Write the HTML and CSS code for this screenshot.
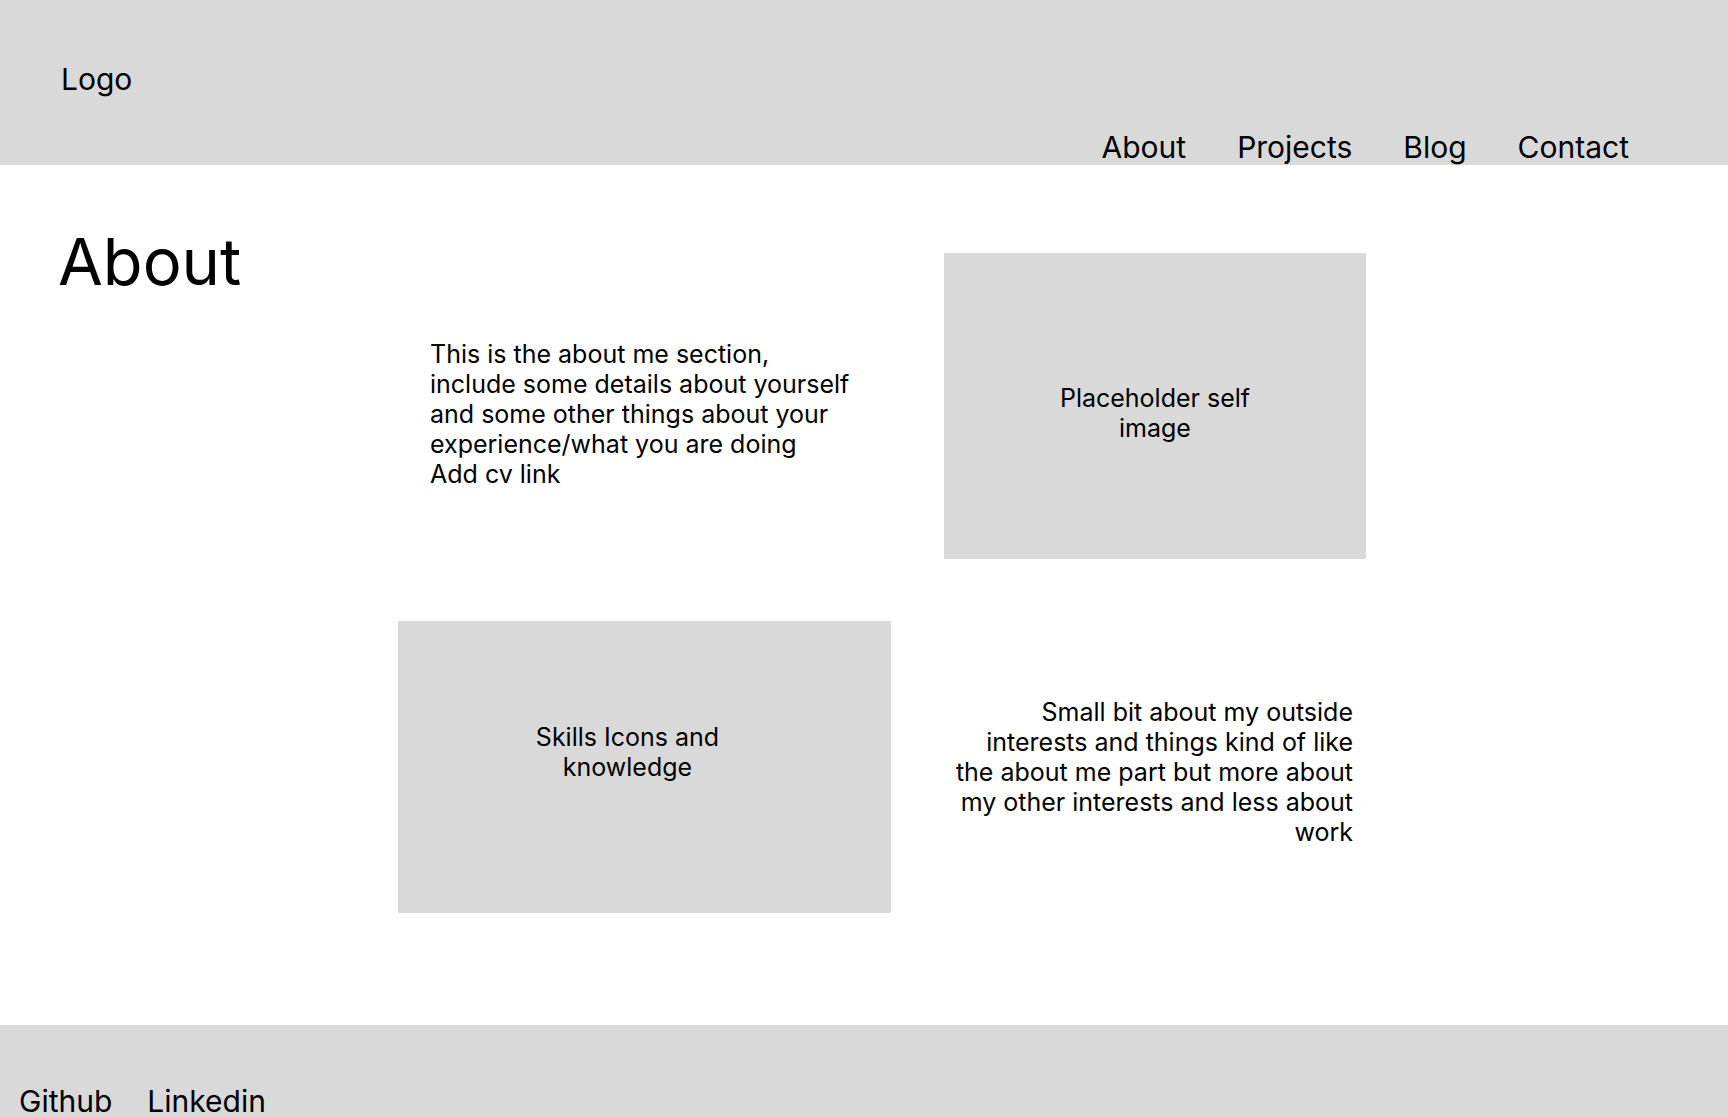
FILE: index.html
```html
<!DOCTYPE html>
<html lang="en">
<head>
  <meta charset="UTF-8" />
  <meta name="viewport" content="width=device-width, initial-scale=1.0"/>
  <title>About</title>
  <link rel="stylesheet" href="styles.css">
</head>
<body>
  <header class="site-header">
    <div class="logo">Logo</div>
    <nav class="nav">
      <a href="#">About</a>
      <a href="#">Projects</a>
      <a href="#">Blog</a>
      <a href="#">Contact</a>
    </nav>
  </header>

  <main class="about">
    <h1 class="about-title">About</h1>
    <div class="about-grid">
      <p class="about-text">This is the about me section, include some details about yourself and some other things about your experience/what you are doing<br>Add cv link</p>
      <div class="placeholder photo"><span>Placeholder self image</span></div>
      <div class="placeholder skills"><span>Skills Icons and knowledge</span></div>
      <p class="about-text outside">Small bit about my outside interests and things kind of like the about me part but more about my other interests and less about work</p>
    </div>
  </main>

  <footer class="site-footer">
    <a href="#">Github</a>
    <a href="#">Linkedin</a>
  </footer>
</body>
</html>
```

FILE: styles.css
```css
body {
  margin: 0;
  font-family: 'Inter', 'Noto Sans', sans-serif;
  color: #000;
  background: #fff;
}
a {
  color: inherit;
  text-decoration: none;
}
.site-header {
  height: 165px;
  background: #d9d9d9;
  display: flex;
  justify-content: space-between;
  padding: 0 99px 0 61px;
}
.logo {
  font-size: 30px;
  margin-top: 61px;
  align-self: flex-start;
}
.nav {
  display: flex;
  gap: 51px;
  align-self: flex-end;
  font-size: 30px;
}
.about {
  display: flex;
  align-items: flex-start;
  padding: 57px 0 0 58px;
}
.about-title {
  width: 340px;
  margin: 0;
  font-size: 65px;
  font-weight: 400;
  flex-shrink: 0;
}
.about-grid {
  margin-top: 31px;
  display: grid;
  grid-template-columns: 493px 422px;
  grid-template-rows: 306px 292px;
  column-gap: 53px;
  row-gap: 62px;
}
.about-text {
  margin: 0;
  font-size: 25px;
  align-self: center;
}
.about-text:first-child {
  width: 423px;
  padding: 16px 0 0 32px;
}
.outside {
  width: 405px;
  justify-self: end;
  text-align: right;
  padding: 10px 13px 0 0;
}
.placeholder {
  background: #d9d9d9;
  display: flex;
  align-items: center;
  justify-content: center;
  text-align: center;
  font-size: 25px;
}
.placeholder span {
  width: 220px;
}
.photo {
  padding-top: 14px;
}
.skills {
  padding: 0 34px 30px 0;
}
.site-footer {
  margin-top: 112px;
  background: #d9d9d9;
  padding: 58px 19px 58px;
  display: flex;
  gap: 35px;
  font-size: 30px;
}
```
